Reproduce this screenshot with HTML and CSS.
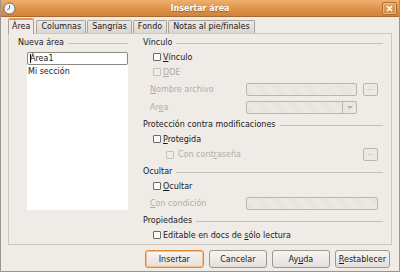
FILE: index.html
```html
<!DOCTYPE html>
<html lang="es">
<head>
    <meta charset="UTF-8">
    <title>Insertar área</title>
    <link rel="stylesheet" href="styles.css">
</head>
<body>
    <div class="window">
        <div class="titlebar">
            <svg class="app-icon" width="13" height="13" viewBox="0 0 13 13">
                <circle cx="6.5" cy="6.5" r="5.5" fill="#f4f4f2" stroke="#6e6a66" stroke-width="1"/>
                <path d="M6.5 3.2 V6.5 L4.2 7.8" fill="none" stroke="#6e6a66" stroke-width="1"/>
            </svg>
            <span class="title">Insertar área</span>
            <span class="close-btn">
                <svg width="7" height="7" viewBox="0 0 7 7">
                    <path d="M1 1 L6 6 M6 1 L1 6" stroke="#ffffff" stroke-width="1.6"/>
                </svg>
            </span>
        </div>

        <div class="dialog">
            <div class="tabs">
                <div class="tab active">Área</div>
                <div class="tab">Columnas</div>
                <div class="tab">Sangrías</div>
                <div class="tab">Fondo</div>
                <div class="tab">Notas al pie/finales</div>
            </div>

            <div class="panel">
                <div class="col-left">
                    <div class="frame-head">Nueva área</div>
                    <div class="name-input"><span class="caret"></span>Área1</div>
                    <div class="section-list">
                        <div class="list-item">Mi sección</div>
                    </div>
                </div>

                <div class="col-right">
                    <div class="frame">
                        <div class="frame-head">Vínculo</div>
                        <div class="check-row">
                            <span class="check"></span><span><u>V</u>ínculo</span>
                        </div>
                        <div class="check-row disabled">
                            <span class="check"></span><span><u>D</u>DE</span>
                        </div>
                        <div class="field-row disabled">
                            <span class="field-label"><u>N</u>ombre archivo</span>
                            <span class="field"></span>
                            <span class="dots-btn">...</span>
                        </div>
                        <div class="field-row disabled">
                            <span class="field-label">Ar<u>e</u>a</span>
                            <span class="field combo"><span class="combo-arrow"></span></span>
                        </div>
                    </div>

                    <div class="frame">
                        <div class="frame-head">Protección contra modificaciones</div>
                        <div class="check-row">
                            <span class="check"></span><span><u>P</u>rotegida</span>
                        </div>
                        <div class="check-row sub disabled">
                            <span class="check"></span><span class="grow">Con cont<u>r</u>aseña</span>
                            <span class="dots-btn">...</span>
                        </div>
                    </div>

                    <div class="frame">
                        <div class="frame-head">Ocultar</div>
                        <div class="check-row">
                            <span class="check"></span><span><u>O</u>cultar</span>
                        </div>
                        <div class="field-row disabled">
                            <span class="field-label"><u>C</u>on condición</span>
                            <span class="field wide"></span>
                        </div>
                    </div>

                    <div class="frame">
                        <div class="frame-head">Propiedades</div>
                        <div class="check-row">
                            <span class="check"></span><span>Editable en docs de <u>s</u>ólo lectura</span>
                        </div>
                    </div>
                </div>
            </div>

            <div class="buttons">
                <button class="btn default">Insertar</button>
                <button class="btn">Cancelar</button>
                <button class="btn">Ay<u>u</u>da</button>
                <button class="btn small"><u>R</u>establecer</button>
            </div>
        </div>
    </div>
</body>
</html>
```

FILE: styles.css
```css
body {
    margin: 0;
    padding: 0;
    font-family: 'DejaVu Sans', sans-serif;
    font-size: 8px;
    color: #1a1a1a;
    background: #efebe7;
}

.window {
    width: 400px;
    height: 272px;
    box-sizing: border-box;
    border: 1px solid #9d958d;
    border-top: none;
    background: #efebe7;
    overflow: hidden;
}

/* title bar */
.titlebar {
    height: 16px;
    margin: 0 -1px;
    display: flex;
    align-items: center;
    position: relative;
    background: linear-gradient(#eeb06f, #dc9147 60%, #d1833a);
    border-bottom: 1px solid #a86a30;
}

.app-icon {
    margin-left: 3px;
}

.title {
    position: absolute;
    left: 0;
    right: 0;
    text-align: center;
    color: #ffffff;
    font-weight: bold;
    font-size: 8px;
    text-shadow: 0 1px 1px rgba(90, 45, 10, 0.5);
    pointer-events: none;
}

.close-btn {
    margin-left: auto;
    margin-right: 3px;
    width: 13px;
    height: 11px;
    border: 1px solid #b16f33;
    border-radius: 2px;
    background: linear-gradient(#e7a260, #d88c44);
    box-shadow: inset 0 0 0 1px rgba(255, 215, 170, 0.5);
    display: flex;
    align-items: center;
    justify-content: center;
}

/* tabs */
.dialog {
    padding: 1px 7px 0 7px;
}

.tabs {
    display: flex;
    align-items: flex-end;
    height: 15px;
    gap: 1px;
    position: relative;
    z-index: 1;
}

.tab {
    height: 12px;
    line-height: 12px;
    padding: 0 4px;
    border: 1px solid #a9a29b;
    border-bottom: none;
    border-radius: 2px 2px 0 0;
    background: linear-gradient(#ece8e4, #dcd6d0);
    color: #1a1a1a;
}

.tab.active {
    height: 14px;
    line-height: 13px;
    padding: 0 3px;
    margin-bottom: -1px;
    margin-right: 1px;
    border-top: 2px solid #e8944a;
    background: #efebe7;
    font-weight: normal;
}

/* page */
.panel {
    height: 212px;
    box-sizing: border-box;
    border: 1px solid #cfc8c0;
    padding: 4px 8px 0 9px;
    display: grid;
    grid-template-columns: 110px 240px;
    column-gap: 15px;
    align-items: start;
}

.frame-head {
    display: flex;
    align-items: center;
    height: 10px;
    line-height: 10px;
    gap: 4px;
}

.frame-head::after {
    content: "";
    flex: 1;
    height: 1px;
    background: #c7c0b8;
}

.name-input {
    margin: 4px 0 0 9px;
    width: 101px;
    height: 13px;
    box-sizing: border-box;
    border: 1px solid #8e8882;
    border-radius: 2px;
    background: #ffffff;
    line-height: 11px;
    padding-left: 2px;
    display: flex;
    align-items: center;
}

.caret {
    width: 1px;
    height: 9px;
    background: #000000;
    margin-right: -1px;
}

.section-list {
    margin-left: 9px;
    width: 101px;
    height: 145px;
    background: #ffffff;
}

.list-item {
    padding: 2px 0 0 1px;
    line-height: 10px;
}

.frame + .frame {
    margin-top: 6px;
}

.check-row {
    display: flex;
    align-items: center;
    height: 12px;
    margin-top: 3px;
    padding-left: 10px;
    gap: 2px;
}

.check-row.sub {
    height: 13px;
    padding-left: 23px;
    gap: 4px;
}

.check {
    width: 6px;
    height: 6px;
    border: 1px solid #6f6a65;
    border-radius: 1px;
    background: #fbfaf8;
}

.grow {
    flex: 1;
}

.field-row {
    display: flex;
    align-items: center;
    height: 13px;
    margin-top: 5px;
    padding-left: 7px;
}

.field-label {
    width: 96px;
}

.field {
    width: 111px;
    height: 13px;
    box-sizing: border-box;
    border: 1px solid #bdb5ad;
    border-radius: 2px;
    background: repeating-linear-gradient(45deg, #e7e2dd 0 1px, #efebe7 1px 2px);
    position: relative;
}

.field.wide {
    width: 132px;
}

.combo-arrow {
    position: absolute;
    top: 0;
    right: 0;
    width: 13px;
    height: 11px;
    border-left: 1px solid #bdb5ad;
}

.combo-arrow::after {
    content: "";
    position: absolute;
    left: 4px;
    top: 4px;
    border-left: 3px solid transparent;
    border-right: 3px solid transparent;
    border-top: 3px solid #b8b1aa;
}

.dots-btn {
    margin-left: 6px;
    margin-right: 5px;
    width: 15px;
    height: 13px;
    box-sizing: border-box;
    border: 1px solid #bdb5ad;
    border-radius: 2px;
    background: #ece8e4;
    color: #b5aea7;
    font-size: 7px;
    line-height: 9px;
    text-align: center;
}

.disabled {
    color: #b3aca5;
}

.disabled .check {
    border-color: #c9c2bb;
    background: #efebe7;
}

/* buttons */
.buttons {
    display: flex;
    justify-content: flex-end;
    gap: 5px;
    margin-top: 5px;
    padding-right: 2px;
}

.btn {
    min-width: 58px;
    height: 18px;
    padding: 0 3px;
    border: 1px solid #9f978f;
    border-radius: 3px;
    background: linear-gradient(#f7f5f3, #e4dfda);
    font-family: 'DejaVu Sans', sans-serif;
    font-size: 8px;
    color: #1a1a1a;
}

.btn.default {
    min-width: 59px;
    border-color: #e0873a;
    box-shadow: inset 0 0 0 1px #f3c08f;
}

.btn.small {
    min-width: 54px;
}
```
